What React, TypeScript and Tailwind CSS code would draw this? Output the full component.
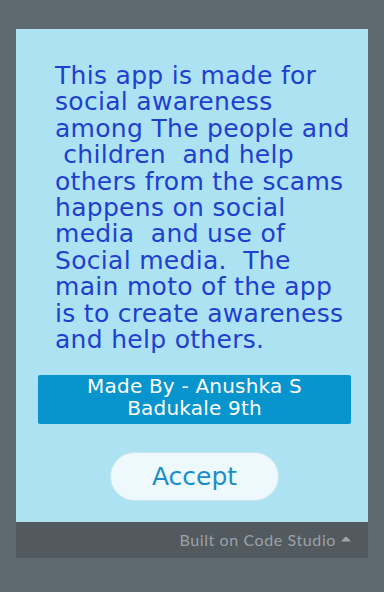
const lines = [
  'This app is made for',
  'social awareness',
  'among The people and',
  ' children  and help',
  'others from the scams',
  'happens on social',
  'media  and use of',
  'Social media.  The',
  'main moto of the app',
  'is to create awareness',
  'and help others.',
];

export default function App() {
  return (
    <div className="min-h-[592px] w-full bg-[#5e6970] pt-[29px]">
      <div className="mx-4 w-[352px]">
        {/* App screen */}
        <div className="flex h-[493px] flex-col bg-[#ace2f2] pt-[34px] font-['DejaVu_Sans',Verdana,sans-serif]">
          <div className="pl-[39px] text-[25px] leading-[26.4px] tracking-[0.3px] text-[#1f3fcf]">
            {lines.map((l) => (
              <div key={l} className="whitespace-pre">
                {l}
              </div>
            ))}
          </div>

          <div className="ml-[22px] mr-[17px] mt-[22px] h-[49px] rounded-[2px] bg-[#0894cc] pt-px text-center text-[20px] leading-[21.5px] tracking-[0.2px] text-white">
            <div>Made By - Anushka S</div>
            <div>Badukale 9th</div>
          </div>

          <div className="mt-[28px] flex justify-center pl-[5px]">
            <button className="h-[49px] w-[169px] rounded-full border border-[#c9e6ef] bg-[#eef9fd] text-[25px] text-[#1a8cc8]">
              Accept
            </button>
          </div>
        </div>

        {/* Footer bar */}
        <div className="flex h-[36px] items-center justify-end gap-[4px] bg-[#52595f] pr-[16px] font-['Lato',sans-serif] text-[16px] tracking-[0.6px] text-[#9ca2a7]">
          <span>Built on Code Studio</span>
          <svg width="12" height="6" viewBox="0 0 12 6" className="mb-[3px]">
            <path d="M1 5.5 L5.2 1 Q6 0.3 6.8 1 L11 5.5 Z" fill="#a0a5aa" />
          </svg>
        </div>
      </div>
    </div>
  );
}
